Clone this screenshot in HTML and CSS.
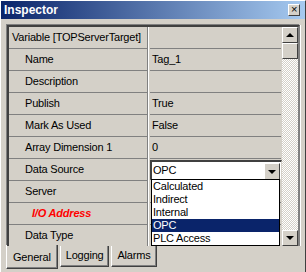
FILE: index.html
```html
<!DOCTYPE html>
<html>
<head>
    <meta name="viewport" content="width=device-width, initial-scale=1">
    <title>Inspector</title>
    <link rel="stylesheet" href="styles.css">
</head>

<body>
    <div class="window">
        <div class="titlebar">
            <span class="title">Inspector</span>
            <span class="close-btn">&#215;</span>
        </div>

        <div class="panel">
            <div class="grid">
                <div class="rows">
                    <div class="row head">
                        <div class="name">Variable [TOPServerTarget]</div>
                        <div class="value"></div>
                    </div>
                    <div class="row">
                        <div class="name">Name</div>
                        <div class="value">Tag_1</div>
                    </div>
                    <div class="row">
                        <div class="name">Description</div>
                        <div class="value"></div>
                    </div>
                    <div class="row">
                        <div class="name">Publish</div>
                        <div class="value">True</div>
                    </div>
                    <div class="row">
                        <div class="name">Mark As Used</div>
                        <div class="value">False</div>
                    </div>
                    <div class="row">
                        <div class="name">Array Dimension 1</div>
                        <div class="value">0</div>
                    </div>
                    <div class="row">
                        <div class="name">Data Source</div>
                        <div class="value combo-cell">
                            <div class="combo">
                                <span class="combo-text">OPC</span>
                                <span class="combo-btn"><span class="arrow-down"></span></span>
                            </div>
                        </div>
                    </div>
                    <div class="row">
                        <div class="name">Server</div>
                        <div class="value"></div>
                    </div>
                    <div class="row">
                        <div class="name required">I/O Address</div>
                        <div class="value"></div>
                    </div>
                    <div class="row">
                        <div class="name">Data Type</div>
                        <div class="value"></div>
                    </div>

                    <div class="dropdown">
                        <div class="option">Calculated</div>
                        <div class="option">Indirect</div>
                        <div class="option">Internal</div>
                        <div class="option selected">OPC</div>
                        <div class="option">PLC Access</div>
                    </div>
                </div>

                <div class="scrollbar">
                    <div class="sb-btn"><span class="arrow-up"></span></div>
                    <div class="sb-thumb"></div>
                    <div class="sb-track"></div>
                    <div class="sb-btn"><span class="arrow-down"></span></div>
                </div>
            </div>

            <div class="tabs">
                <div class="tab active">General</div>
                <div class="tab">Logging</div>
                <div class="tab">Alarms</div>
            </div>
        </div>
    </div>
</body>

</html>
```

FILE: styles.css
```css
body {
    margin: 0;
    background-color: #d4d0c8;
    font-family: "Liberation Sans", Arial, sans-serif;
    font-size: 11px;
    letter-spacing: -0.2px;
    color: black;
}

.window {
    width: 306px;
    height: 272px;
    box-sizing: border-box;
    border-left: 1px solid white;
    border-top: 1px solid white;
    border-right: 1px solid #404040;
    overflow: hidden;
}

.titlebar {
    height: 18px;
    display: flex;
    align-items: center;
    justify-content: space-between;
    padding: 0 3px 0 3px;
    background: linear-gradient(to right, #0a246a, #a6caf0);
}

.title {
    color: white;
    font-weight: bold;
    font-size: 12px;
    letter-spacing: 0;
}

.close-btn {
    width: 10px;
    height: 10px;
    margin-right: 2px;
    background-color: #d4d0c8;
    border-top: 1px solid white;
    border-left: 1px solid white;
    border-right: 1px solid #404040;
    border-bottom: 1px solid #404040;
    font-size: 11px;
    line-height: 9px;
    text-align: center;
}

.panel {
    padding: 6px 5px 0 6px;
}

.grid {
    display: flex;
    border-top: 2px solid #404040;
    border-left: 2px solid #404040;
    border-right: 2px solid #808080;
    box-shadow: -1px -1px 0 #808080, 1px 0 0 white;
    height: 219px;
    overflow: hidden;
}

.rows {
    position: relative;
    flex: 1;
}

.row {
    display: flex;
    height: 22px;
}

.name {
    width: 139px;
    padding-left: 16px;
    box-sizing: border-box;
    line-height: 21px;
    border-bottom: 1px solid #808080;
    border-right: 1px solid #808080;
    box-shadow: 1px 0 0 white;
    white-space: nowrap;
}

.head .name {
    padding-left: 3px;
}

.required {
    color: #ff0000;
    font-weight: bold;
    font-style: italic;
    padding-left: 23px;
}

.value {
    flex: 1;
    margin-left: 2px;
    margin-right: 1px;
    padding-left: 2px;
    line-height: 21px;
    border-bottom: 1px solid #808080;
}

.combo-cell {
    margin-right: 0;
    padding-left: 0;
    border-bottom: none;
}

.combo {
    display: flex;
    height: 17px;
    margin-top: 1px;
    background-color: white;
    border-top: 2px solid #404040;
    border-left: 2px solid #404040;
    border-right: 1px solid #d4d0c8;
    border-bottom: 1px solid #d4d0c8;
}

.combo-text {
    flex: 1;
    line-height: 17px;
    padding-left: 1px;
}

.combo-btn {
    width: 14px;
    height: 15px;
    margin: 1px 1px 0 0;
    background-color: #d4d0c8;
    border-top: 1px solid white;
    border-left: 1px solid white;
    border-right: 1px solid #404040;
    border-bottom: 1px solid #404040;
    display: flex;
    align-items: center;
    justify-content: center;
}

.arrow-down {
    width: 0;
    height: 0;
    border-left: 4px solid transparent;
    border-right: 4px solid transparent;
    border-top: 4px solid black;
}

.arrow-up {
    width: 0;
    height: 0;
    border-left: 4px solid transparent;
    border-right: 4px solid transparent;
    border-bottom: 4px solid black;
}

.dropdown {
    position: absolute;
    left: 142px;
    top: 152px;
    width: 127px;
    background-color: white;
    border: 1px solid black;
}

.option {
    height: 13px;
    line-height: 13px;
    padding-left: 1px;
}

.selected {
    background-color: #0a246a;
    color: white;
}

.scrollbar {
    width: 16px;
    display: flex;
    flex-direction: column;
}

.sb-btn,
.sb-thumb {
    height: 14px;
    background-color: #d4d0c8;
    border-top: 1px solid white;
    border-left: 1px solid white;
    border-right: 1px solid #404040;
    border-bottom: 1px solid #404040;
    display: flex;
    align-items: center;
    justify-content: center;
}

.sb-track {
    flex: 1;
    background-image: repeating-conic-gradient(white 0 25%, #d4d0c8 0 50%);
    background-size: 2px 2px;
}

.tabs {
    display: flex;
    gap: 2px;
    margin-left: -1px;
}

.tab {
    height: 20px;
    padding: 0 5px;
    line-height: 19px;
    font-size: 11px;
    border-left: 1px solid white;
    border-right: 1px solid #404040;
    border-bottom: 1px solid #404040;
    box-shadow: inset -1px -1px 0 #808080;
}

.tab.active {
    height: 23px;
    padding: 0 6px;
    line-height: 25px;
    margin-top: -1px;
}
```
